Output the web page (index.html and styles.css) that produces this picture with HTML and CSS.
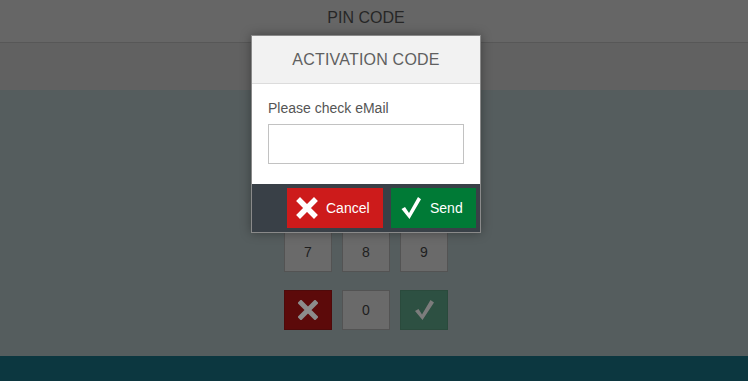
FILE: index.html
```html
<!DOCTYPE html>
<html>
<head>
<meta charset="utf-8">
<link rel="stylesheet" href="styles.css">
</head>
<body>
<div class="page">
  <header class="topbar"><span class="title">PIN CODE</span></header>
  <div class="band"></div>
  <main class="main">
    <div class="keypad">
      <div class="key">1</div><div class="key">2</div><div class="key">3</div>
      <div class="key">4</div><div class="key">5</div><div class="key">6</div>
      <div class="key">7</div><div class="key">8</div><div class="key">9</div>
      <div class="key key-clear">
        <svg width="20" height="20" viewBox="0 0 20 20"><path d="M3 3 L17 17 M17 3 L3 17" stroke="currentColor" stroke-width="5" stroke-linecap="square" fill="none"/></svg>
      </div>
      <div class="key">0</div>
      <div class="key key-ok">
        <svg width="20" height="22" viewBox="0 0 20 22"><path d="M1 12 L4.5 10 L8 15.5 L16.5 1 L20 3.5 L8.5 21 Z" fill="currentColor"/></svg>
      </div>
    </div>
  </main>
  <footer class="footer"></footer>
</div>

<div class="modal">
  <div class="modal-head">ACTIVATION CODE</div>
  <div class="modal-body">
    <label class="field-label" for="code">Please check eMail</label>
    <input class="field" id="code" type="text">
  </div>
  <div class="modal-foot">
    <button class="btn btn-cancel">
      <svg width="22" height="22" viewBox="0 0 22 22"><path d="M4 4 L18 18 M18 4 L4 18" stroke="#fff" stroke-width="5.5" stroke-linecap="square" fill="none"/></svg>
      <span>Cancel</span>
    </button>
    <button class="btn btn-send">
      <svg width="22" height="24" viewBox="0 0 22 24"><path d="M1.5 13 L5 11 L9 17 L18 1 L21 3.2 L9.5 23 Z" fill="#fff"/></svg>
      <span>Send</span>
    </button>
  </div>
</div>
</body>
</html>
```

FILE: styles.css
```css
* { box-sizing: border-box; }
html, body { margin: 0; padding: 0; }
body {
  width: 748px;
  height: 381px;
  overflow: hidden;
  font-family: "Liberation Sans", Arial, sans-serif;
  position: relative;
}
.page {
  height: 381px;
  display: flex;
  flex-direction: column;
}
.topbar {
  height: 43px;
  background: #666666;
  border-bottom: 1px solid #575757;
  padding-right: 16px;
  display: flex;
  justify-content: center;
  padding-top: 9px;
}
.title {
  font-size: 16px;
  color: #262626;
}
.band {
  height: 47px;
  background: #616161;
}
.main {
  flex: 1;
  background: #555d5e;
  padding: 26px 16px 0 0;
  display: flex;
  justify-content: center;
}
.keypad {
  display: grid;
  grid-template-columns: repeat(3, 48px);
  grid-auto-rows: 40px;
  column-gap: 10px;
  row-gap: 18px;
  align-content: start;
}
.key {
  background: #6a6a6a;
  border: 1px solid #535353;
  color: #1e1e1e;
  font-size: 14px;
  display: flex;
  align-items: center;
  justify-content: center;
}
.key-clear {
  background: #5c0a0a;
  border-color: #4e0a0a;
  color: #8c8c8c;
}
.key-ok {
  background: #2d5042;
  border-color: #2a4a3c;
  color: #7c7c7c;
}
.footer {
  height: 25px;
  background: #0c3740;
}

.modal {
  position: absolute;
  left: 251px;
  top: 35px;
  width: 230px;
  border: 1px solid #8a8a8a;
  background: #fff;
  box-shadow: 0 0 10px rgba(0, 0, 0, 0.35);
}
.modal-head {
  height: 48px;
  background: #f2f2f2;
  border-bottom: 1px solid #dcdcdc;
  color: #606060;
  font-size: 16px;
  display: flex;
  align-items: center;
  justify-content: center;
  letter-spacing: 0.2px;
}
.modal-body {
  padding: 16px 16px 20px 16px;
  display: flex;
  flex-direction: column;
}
.field-label {
  font-size: 14px;
  color: #555;
  margin-bottom: 8px;
  line-height: 16px;
}
.field {
  height: 40px;
  width: 196px;
  border: 1px solid #c2c2c2;
  background: #fff;
  margin: 0;
}
.modal-foot {
  background: #394047;
  padding: 4px 4px 4px 0;
  display: flex;
  justify-content: flex-end;
  gap: 8px;
}
.btn {
  height: 40px;
  border: none;
  color: #fff;
  font-family: "Liberation Sans", Arial, sans-serif;
  font-size: 14px;
  display: flex;
  align-items: center;
  padding: 0;
  cursor: pointer;
}
.btn svg { display: block; flex: none; }
.btn-cancel {
  width: 96px;
  background: #cd1b1b;
  padding-left: 9px;
  gap: 8px;
}
.btn-send {
  width: 85px;
  background: #007a36;
  padding-left: 9px;
  gap: 8px;
}
```
